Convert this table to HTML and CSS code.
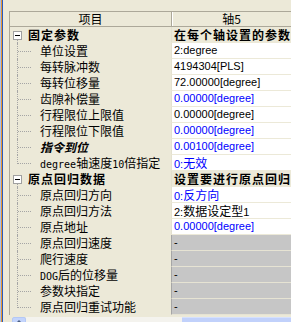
FILE: index.html
```html
<!DOCTYPE html>
<html>
<head>
<meta charset="utf-8">
<link rel="stylesheet" href="styles.css">
</head>
<body>
<div class="edge"></div>
<div class="main">
  <div class="grid">
    <div class="row hdr">
      <div class="hc">项目</div>
      <div class="hc hc-r">轴5</div>
    </div>

    <div class="row group">
      <div class="lc"><div class="gtree"><span class="box"></span><span class="stem"></span></div><span class="glabel">固定参数</span></div>
      <div class="rc rc-g">在每个轴设置的参数</div>
    </div>
    <div class="row">
      <div class="lc"><span class="tree"></span><span class="label">单位设置</span></div>
      <div class="rc">2:degree</div>
    </div>
    <div class="row">
      <div class="lc"><span class="tree"></span><span class="label">每转脉冲数</span></div>
      <div class="rc">4194304[PLS]</div>
    </div>
    <div class="row">
      <div class="lc"><span class="tree"></span><span class="label">每转位移量</span></div>
      <div class="rc">72.00000[degree]</div>
    </div>
    <div class="row">
      <div class="lc"><span class="tree"></span><span class="label">齿隙补偿量</span></div>
      <div class="rc blue">0.00000[degree]</div>
    </div>
    <div class="row">
      <div class="lc"><span class="tree"></span><span class="label">行程限位上限值</span></div>
      <div class="rc">0.00000[degree]</div>
    </div>
    <div class="row">
      <div class="lc"><span class="tree"></span><span class="label">行程限位下限值</span></div>
      <div class="rc blue">0.00000[degree]</div>
    </div>
    <div class="row">
      <div class="lc"><span class="tree"></span><span class="label bi">指令到位</span></div>
      <div class="rc blue">0.00100[degree]</div>
    </div>
    <div class="row last">
      <div class="lc"><span class="tree"></span><span class="label"><span class="lat">degree</span>轴速度<span class="lat">10</span>倍指定</span></div>
      <div class="rc blue">0:<span class="cj">无效</span></div>
    </div>

    <div class="row group">
      <div class="lc"><div class="gtree"><span class="box"></span><span class="stem"></span></div><span class="glabel">原点回归数据</span></div>
      <div class="rc rc-g">设置要进行原点回归的参数</div>
    </div>
    <div class="row">
      <div class="lc"><span class="tree"></span><span class="label">原点回归方向</span></div>
      <div class="rc blue">0:<span class="cj">反方向</span></div>
    </div>
    <div class="row">
      <div class="lc"><span class="tree"></span><span class="label">原点回归方法</span></div>
      <div class="rc">2:<span class="cj">数据设定型</span>1</div>
    </div>
    <div class="row">
      <div class="lc"><span class="tree"></span><span class="label">原点地址</span></div>
      <div class="rc blue">0.00000[degree]</div>
    </div>
    <div class="row">
      <div class="lc"><span class="tree"></span><span class="label">原点回归速度</span></div>
      <div class="rc rc-na">-</div>
    </div>
    <div class="row">
      <div class="lc"><span class="tree"></span><span class="label">爬行速度</span></div>
      <div class="rc rc-na">-</div>
    </div>
    <div class="row">
      <div class="lc"><span class="tree"></span><span class="label"><span class="lat">DOG</span>后的位移量</span></div>
      <div class="rc rc-na">-</div>
    </div>
    <div class="row">
      <div class="lc"><span class="tree"></span><span class="label">参数块指定</span></div>
      <div class="rc rc-na">-</div>
    </div>
    <div class="row last">
      <div class="lc"><span class="tree"></span><span class="label">原点回归重试功能</span></div>
      <div class="rc rc-na">-</div>
    </div>
  </div>

  <div class="hscroll">
    <div class="sbtn"><span class="arrow"></span></div>
    <div class="track"></div>
    <div class="thumb"></div>
  </div>
</div>
</body>
</html>
```

FILE: styles.css
```css
html, body {
  margin: 0;
  padding: 0;
}

body {
  width: 291px;
  height: 322px;
  overflow: hidden;
  background: #ECE9D8;
  display: flex;
  font-family: "Noto Sans CJK SC", sans-serif;
  font-size: 12px;
  color: #000;
}

.edge {
  flex: none;
  width: 3px;
  background: linear-gradient(to right, #A9C1EC 0 1px, #E8962E 1px 2px, #2A5BC4 2px 3px);
}

.main {
  flex: 1;
  min-width: 0;
  padding: 11px 0 0 6px;
  display: flex;
  flex-direction: column;
}

.grid {
  border-top: 1px solid #ACA899;
  border-left: 1px solid #ACA899;
}

.row {
  display: grid;
  grid-template-columns: 161px 1fr;
  height: 16px;
}

.hdr {
  height: 15px;
}

.hc {
  text-align: center;
  line-height: 14px;
  height: 14px;
  border-bottom: 1px solid #ACA899;
  white-space: nowrap;
}

.hc-r {
  border-left: 1px solid #ACA899;
  box-shadow: inset 1px 0 0 #fff;
}

.lc {
  display: flex;
  align-items: flex-start;
  overflow: hidden;
  white-space: nowrap;
  line-height: 16px;
}

.tree {
  flex: none;
  box-sizing: border-box;
  margin-left: 7px;
  margin-right: 9px;
  width: 14px;
  height: 16px;
  border-left: 1px dotted #A5A5A5;
  display: flex;
  flex-direction: column;
}

.tree::before {
  content: "";
  display: block;
  height: 8px;
  border-bottom: 1px dotted #A5A5A5;
}

.last .tree {
  border-left: none;
}

.last .tree::before {
  border-left: 1px dotted #A5A5A5;
}

.label {
  white-space: nowrap;
}

.lat {
  font-family: "DejaVu Sans Mono", monospace;
  font-size: 10px;
}

.bi {
  font-weight: bold;
  font-style: italic;
}

.gtree {
  flex: none;
  margin-left: 3px;
  margin-right: 6px;
  width: 9px;
  height: 16px;
  padding-top: 4px;
  box-sizing: border-box;
  display: flex;
  flex-direction: column;
}

.box {
  flex: none;
  box-sizing: border-box;
  width: 9px;
  height: 9px;
  border: 1px solid #A0A0A0;
  background: #fff;
  display: flex;
  align-items: center;
  justify-content: center;
}

.box::before {
  content: "";
  width: 5px;
  height: 1px;
  background: #000;
}

.stem {
  flex: 1;
  margin-left: 4px;
  border-left: 1px dotted #A5A5A5;
}

.glabel {
  font-weight: bold;
  letter-spacing: 1px;
  white-space: nowrap;
}

.rc {
  box-sizing: border-box;
  height: 16px;
  padding-left: 2px;
  background: #fff;
  border-left: 1px solid #E4E1CF;
  border-bottom: 1px solid #ECE9D8;
  font-family: "Liberation Sans", "Noto Sans CJK SC", sans-serif;
  font-size: 11px;
  line-height: 15px;
  white-space: nowrap;
  overflow: hidden;
}

.rc-g {
  background: #ECE9D8;
  font-family: "Noto Sans CJK SC", sans-serif;
  font-size: 12px;
  font-weight: bold;
  letter-spacing: 1px;
}

.rc-na {
  background: #C6C6C6;
  border-left-color: #A6A6A6;
  border-bottom-color: #E6E3D3;
}

.blue {
  color: #0000FF;
}

.cj {
  font-family: "Noto Sans CJK SC", sans-serif;
  font-size: 12px;
}

.hscroll {
  margin-top: 2px;
  margin-left: 3px;
  height: 5px;
  display: flex;
}

.sbtn {
  flex: none;
  box-sizing: border-box;
  width: 14px;
  height: 14px;
  background: #C3D4FC;
  border: 1px solid #B4C8F6;
  border-radius: 2px;
  display: flex;
  justify-content: center;
  padding-top: 2px;
}

.arrow {
  width: 0;
  height: 0;
  border-left: 3px solid transparent;
  border-right: 3px solid transparent;
  border-bottom: 3px solid #4D6185;
}

.track {
  flex: none;
  width: 156px;
  background: #F4F3EE;
}

.thumb {
  flex: 1;
  background: #C1D1FB;
  border-top: 1px solid #D6E1FD;
}
```
